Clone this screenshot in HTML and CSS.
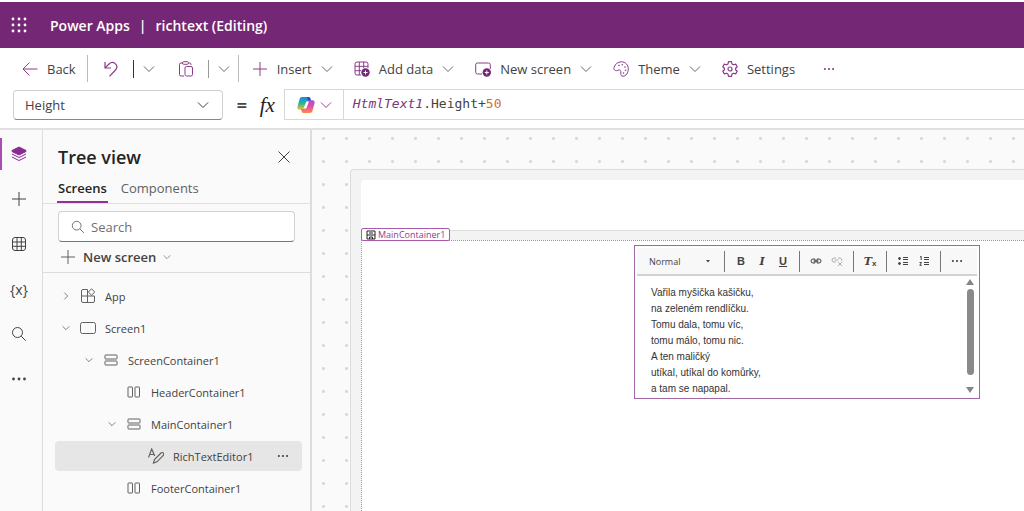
FILE: index.html
```html
<!DOCTYPE html>
<html lang="en">
<head>
    <meta charset="UTF-8">
    <meta name="viewport" content="width=device-width, initial-scale=1.0">
    <title>richtext (Editing) - Power Apps</title>
    <link rel="stylesheet" href="styles.css">
</head>
<body>

    <!-- Shared icons -->
    <svg class="sprite" aria-hidden="true">
        <symbol id="chevron" viewBox="0 0 12 12"><path d="M1 3.5l5 5 5-5"/></symbol>
        <symbol id="plus" viewBox="0 0 16 16"><path d="M8 1v14M1 8h14"/></symbol>
        <symbol id="rows" viewBox="0 0 16 16"><rect x="2" y="3" width="12" height="4" rx=".5"/><rect x="2" y="9" width="12" height="4" rx=".5"/></symbol>
        <symbol id="columns" viewBox="0 0 16 16"><rect x="2" y="3" width="4.500" height="10" rx=".5"/><rect x="9" y="3" width="4.500" height="10" rx=".5"/></symbol>
        <symbol id="search" viewBox="0 0 16 16"><circle cx="6.5" cy="6.5" r="5"/><path d="M10.2 10.2l4.6 4.6"/></symbol>
        <symbol id="grid" viewBox="0 0 16 16"><rect x="1.5" y="1.5" width="13" height="13" rx="2.5"/><path d="M6 1.5v13M10.3 1.5v13M1.5 6h13M1.5 10.3h13"/></symbol>
        <symbol id="dots" viewBox="0 0 16 16"><g fill="currentColor" stroke="none"><circle cx="2.5" cy="8" r="1.4"/><circle cx="8" cy="8" r="1.4"/><circle cx="13.5" cy="8" r="1.4"/></g></symbol>
    </svg>

    <header class="titlebar">
        <button class="waffle" aria-label="App launcher">
            <svg class="icon" viewBox="0 0 16 16"><g fill="#fff" stroke="none"><circle cx="2" cy="2" r="1.4"/><circle cx="8" cy="2" r="1.4"/><circle cx="14" cy="2" r="1.4"/><circle cx="2" cy="8" r="1.4"/><circle cx="8" cy="8" r="1.4"/><circle cx="14" cy="8" r="1.4"/><circle cx="2" cy="14" r="1.4"/><circle cx="8" cy="14" r="1.4"/><circle cx="14" cy="14" r="1.4"/></g></svg>
        </button>
        <span>Power Apps</span>
        <span>|</span>
        <span>richtext (Editing)</span>
    </header>

    <nav class="commands">
        <button class="command"><svg class="icon" viewBox="0 0 16 16"><path d="M15.5 8H1M7.5 1.5L1 8l6.5 6.5"/></svg>Back</button>
        <span class="divider tall"></span>
        <div class="split">
            <button class="command" aria-label="Undo"><svg class="icon" viewBox="0 0 16 16"><path d="M2 1v6h6M2.300 6.700L6 3c2-2 4.600-1.800 6.200-.4 2 1.800 2 4.500.3 6.400L6.500 15.300" stroke-width="1.200"/></svg></button>
            <span class="divider dark"></span>
            <button class="command" aria-label="Undo options"><svg class="chevron"><use href="#chevron"/></svg></button>
        </div>
        <div class="split">
            <button class="command" aria-label="Paste"><svg class="icon" viewBox="0 0 16 16"><path d="M6 15H3A1.500 1.500 0 0 1 1.500 13.500v-10A1.500 1.500 0 0 1 3 2H5M11 2h.5A1.500 1.500 0 0 1 13 3.500V4"/><rect x="4.500" y=".7" width="6" height="2.600" rx="1.200"/><rect x="7" y="5.500" width="7.500" height="9.500" rx="1.500"/></svg></button>
            <span class="divider"></span>
            <button class="command" aria-label="Paste options"><svg class="chevron"><use href="#chevron"/></svg></button>
        </div>
        <span class="divider tall"></span>
        <button class="command insert"><svg class="icon"><use href="#plus"/></svg>Insert<svg class="chevron"><use href="#chevron"/></svg></button>
        <button class="command"><svg class="icon" viewBox="0 0 16 16"><path d="M7 14H3a2 2 0 0 1-2-2V3a2 2 0 0 1 2-2h9a2 2 0 0 1 2 2v4M5.300 1v13M9.700 1v6M1 5.300h13M1 9.700h6"/><circle cx="11.500" cy="11.500" r="4.200" fill="#742774" stroke="none"/><path d="M11.500 9.500v4M9.500 11.500h4" stroke="#fff"/></svg>Add data<svg class="chevron"><use href="#chevron"/></svg></button>
        <button class="command"><svg class="icon" viewBox="0 0 16 16"><path d="M7 13H2.500A1.800 1.800 0 0 1 .7 11.200V3.800A1.800 1.800 0 0 1 2.500 2h11a1.800 1.800 0 0 1 1.800 1.800V8"/><circle cx="11.800" cy="11.500" r="4.200" fill="#742774" stroke="none"/><path d="M11.800 9.500v4M9.800 11.500h4" stroke="#fff"/></svg>New screen<svg class="chevron"><use href="#chevron"/></svg></button>
        <button class="command"><svg class="icon" viewBox="0 0 16 16"><path d="M1 6.500C2 3 5 .8 8.300.8c4 0 7 3 7 7 0 4-2.300 7.400-5.300 7.400-1.800 0-2.400-1.300-2.200-3C8.200 9.700 7 8.300 5 9.200c-2 1-4.600.4-4-2.700z"/><g fill="currentColor" stroke="none"><circle cx="6" cy="4.500" r=".8"/><circle cx="9.300" cy="3.800" r=".8"/><circle cx="12" cy="6" r=".8"/><circle cx="12.500" cy="9.200" r=".8"/><circle cx="10.500" cy="12" r=".8"/></g></svg>Theme<svg class="chevron"><use href="#chevron"/></svg></button>
        <button class="command"><svg class="icon" viewBox="0 0 16 16"><path d="M6.500.7h3l.5 2.200 1.500.9 2.200-.7 1.500 2.600L13.600 7.200v1.600l1.600 1.500-1.500 2.600-2.200-.7-1.500.9-.5 2.200h-3L6 13.100l-1.500-.9-2.200.7-1.500-2.600 1.600-1.500V7.200L.8 5.700l1.500-2.600 2.200.7L6 2.900z" stroke-width="1.200" stroke-linejoin="round"/><circle cx="8" cy="8" r="2" stroke-width="1.200"/></svg>Settings</button>
        <button class="command overflow" aria-label="More commands"><svg class="chevron"><use href="#dots"/></svg></button>
    </nav>

    <div class="formula">
        <div class="property">
            <select aria-label="Property">
                <option>Height</option>
            </select>
            <svg class="chevron"><use href="#chevron"/></svg>
        </div>
        <span class="equals">=</span>
        <span class="fx">fx</span>
        <div class="expression">
            <button class="copilot" aria-label="Copilot">
                <svg viewBox="0 0 18 18">
                    <defs>
                        <linearGradient id="cool" x1="0" y1="0" x2="0" y2="1"><stop offset="0" stop-color="#1a8be8"/><stop offset=".5" stop-color="#28b39a"/><stop offset="1" stop-color="#f2c230"/></linearGradient>
                        <linearGradient id="warm" x1="0" y1="0" x2="0" y2="1"><stop offset="0" stop-color="#9a52e0"/><stop offset=".5" stop-color="#e8509c"/><stop offset="1" stop-color="#ff8a4c"/></linearGradient>
                    </defs>
                    <path d="M5 1h6.500c1 0 1.600.8 1.900 1.800L14 5h-2.500c-1 0-1.500.6-1.800 1.500L8 12c-.4 1.200-1 1.700-2.200 1.700H2.500C.7 13.700 0 12.300.5 10.500L2.600 3C3 1.700 3.700 1 5 1z" fill="url(#cool)"/>
                    <path d="M10 1h1.500c1 0 1.600.8 1.900 1.800L14 5h-3z" fill="#1b4fc4"/>
                    <path d="M13 17H6.500c-1 0-1.600-.8-1.900-1.800L4 13h2.500c1 0 1.500-.6 1.800-1.500L10 6c.4-1.200 1-1.700 2.200-1.700h3.300c1.800 0 2.500 1.400 2 3.200L15.400 15c-.4 1.300-1.100 2-2.400 2z" fill="url(#warm)"/>
                    <path d="M9.300 5.500H12L9.200 12.500H6.500z" fill="#fff"/>
                </svg>
                <svg class="chevron"><use href="#chevron"/></svg>
            </button>
            <div class="code" role="textbox" contenteditable="true" spellcheck="false" aria-label="Formula"><i>HtmlText1</i>.Height+<b>50</b></div>
        </div>
    </div>

    <div class="workspace">
        <nav class="rail">
            <button class="active" aria-label="Tree view"><svg class="icon" viewBox="0 0 16 16"><path d="M8 1l7 3.500v1L8 9 1 5.500v-1z" fill="currentColor"/><path d="M1 8l7 3.500L15 8M1 11l7 3.500 7-3.500"/></svg></button>
            <button aria-label="Insert"><svg class="icon"><use href="#plus"/></svg></button>
            <button aria-label="Data"><svg class="icon"><use href="#grid"/></svg></button>
            <button class="variables" aria-label="Variables">{x}</button>
            <button aria-label="Search"><svg class="icon"><use href="#search"/></svg></button>
            <button aria-label="More"><svg class="icon"><use href="#dots"/></svg></button>
        </nav>

        <aside class="panel">
            <div class="panel-head">
                <h2>Tree view</h2>
                <button aria-label="Close"><svg class="chevron" viewBox="0 0 12 12"><path d="M.5.5l11 11M11.5.5l-11 11"/></svg></button>
            </div>
            <div class="tabs" role="tablist">
                <button class="tab selected" role="tab" aria-selected="true">Screens</button>
                <button class="tab" role="tab" aria-selected="false">Components</button>
            </div>
            <label class="search">
                <svg class="search-icon"><use href="#search"/></svg>
                <input type="text" placeholder="Search" aria-label="Search">
            </label>
            <button class="new-screen"><svg class="icon"><use href="#plus"/></svg>New screen<svg class="small-chevron"><use href="#chevron"/></svg></button>

            <ul class="tree">
                <li class="level-1">
                    <button class="toggle closed" aria-label="Expand"><svg class="small-chevron"><use href="#chevron"/></svg></button>
                    <svg class="icon" viewBox="0 0 16 16"><path d="M7.500 14.500v-13H3A1.500 1.500 0 0 0 1.500 3v10A1.500 1.500 0 0 0 3 14.500h10a1.500 1.500 0 0 0 1.500-1.500V8h-13M11.500.8l3.300 3.200-3.300 3.200L8.300 4z"/></svg>
                    <a href="#app">App</a>
                </li>
                <li class="level-1">
                    <button class="toggle" aria-label="Collapse"><svg class="small-chevron"><use href="#chevron"/></svg></button>
                    <svg class="icon" viewBox="0 0 16 16"><rect x=".5" y="2.500" width="15" height="11" rx="2"/></svg>
                    <a href="#screen">Screen1</a>
                </li>
                <li class="level-2">
                    <button class="toggle" aria-label="Collapse"><svg class="small-chevron"><use href="#chevron"/></svg></button>
                    <svg class="icon"><use href="#rows"/></svg>
                    <a href="#screen-container">ScreenContainer1</a>
                </li>
                <li class="level-3">
                    <span class="toggle"></span>
                    <svg class="icon"><use href="#columns"/></svg>
                    <a href="#header-container">HeaderContainer1</a>
                </li>
                <li class="level-3">
                    <button class="toggle" aria-label="Collapse"><svg class="small-chevron"><use href="#chevron"/></svg></button>
                    <svg class="icon"><use href="#rows"/></svg>
                    <a href="#main-container">MainContainer1</a>
                </li>
                <li class="level-4 current">
                    <span class="toggle"></span>
                    <svg class="icon" viewBox="0 0 16 16"><path d="M.5 9.500L3.700 1l3 7M1.700 6.500h4M5.500 15l1-3.500 6.500-6.500a1.600 1.600 0 0 1 2.300 2.300L9 13.800z" stroke-width="1.200"/></svg>
                    <a href="#rich-text-editor">RichTextEditor1</a>
                    <button class="more" aria-label="More actions"><svg class="chevron"><use href="#dots"/></svg></button>
                </li>
                <li class="level-3">
                    <span class="toggle"></span>
                    <svg class="icon"><use href="#columns"/></svg>
                    <a href="#footer-container">FooterContainer1</a>
                </li>
            </ul>
        </aside>

        <main class="canvas">
            <div class="screen">
                <div class="header-container"></div>
                <div class="main-container">
                    <span class="tag"><svg viewBox="0 0 10 10"><path d="M1 1h8v8H1zM1 5h8M3 3h4M3.500 9V7h3v2" fill="none" stroke="#222"/></svg>MainContainer1</span>
                    <div class="editor">
                        <div class="editor-tools" role="toolbar">
                            <div class="style-pick">
                                <select aria-label="Style">
                                    <option>Normal</option>
                                </select>
                                <svg viewBox="0 0 6 6"><path d="M1 2h4L3 4.500z"/></svg>
                            </div>
                            <div class="tool-group">
                                <button aria-label="Bold"><b>B</b></button>
                                <button class="serif" aria-label="Italic"><i>I</i></button>
                                <button aria-label="Underline"><u>U</u></button>
                            </div>
                            <div class="tool-group">
                                <button aria-label="Link"><svg viewBox="0 0 12 12"><path d="M5 4H3a2 2 0 0 0 0 4h2M7 4h2a2 2 0 0 1 0 4H7M3.500 6h5M5 4v4M7 4v4"/></svg></button>
                                <button aria-label="Unlink" disabled><svg viewBox="0 0 12 12"><path d="M5 3H3a2 2 0 0 0 0 4h2M7 3h2a2 2 0 0 1 1.500 3M3.500 5h4M7 7l4 4M11 7l-4 4"/></svg></button>
                            </div>
                            <div class="tool-group">
                                <button class="serif clear" aria-label="Remove format"><i>T</i><sub>x</sub></button>
                            </div>
                            <div class="tool-group">
                                <button aria-label="Bulleted list"><svg viewBox="0 0 12 12"><path d="M6 2.500h5M6 4.500h5M6 7.500h5M6 9.500h5"/><circle cx="2.500" cy="3.500" r="1"/><circle cx="2.500" cy="8.500" r="1"/></svg></button>
                                <button aria-label="Numbered list"><svg viewBox="0 0 12 12"><path d="M6 2.500h5M6 4.500h5M6 7.500h5M6 9.500h5M2 2l1.200-.7V5M1.500 7.500h2L1.800 10.300h2"/></svg></button>
                            </div>
                            <div class="tool-group">
                                <button aria-label="More tools"><svg viewBox="0 0 16 16"><use href="#dots"/></svg></button>
                            </div>
                        </div>
                        <div class="editor-body">
                            <div class="editor-text" role="textbox" aria-multiline="true" aria-label="Rich text" contenteditable="true" spellcheck="false" lang="cs">
                                Vařila myšička kašičku,<br>
                                na zeleném rendlíčku.<br>
                                Tomu dala, tomu víc,<br>
                                tomu málo, tomu nic.<br>
                                A ten maličký<br>
                                utíkal, utíkal do komůrky,<br>
                                a tam se napapal.
                            </div>
                            <div class="scrollbar">
                                <svg viewBox="0 0 8 6"><path d="M4 0l4 6H0z"/></svg>
                                <span class="thumb"></span>
                                <svg viewBox="0 0 8 6"><path d="M0 0h8L4 6z"/></svg>
                            </div>
                        </div>
                    </div>
                </div>
            </div>
        </main>
    </div>

</body>
</html>
```
FILE: styles.css
```css
* {
    box-sizing: border-box;
}
body {
    display: flex;
    flex-direction: column;
    height: 100vh;
    margin: 0;
    overflow: hidden;
    font-family: "Open Sans", "Noto Sans", sans-serif;
    font-size: 13px;
    color: #424242;
    background: #fff;
}
button {
    display: flex;
    align-items: center;
    padding: 0;
    border: none;
    background: none;
    font: inherit;
    color: inherit;
    cursor: pointer;
}
svg {
    flex: none;
    fill: none;
    stroke: currentColor;
}
.sprite {
    display: none;
}
.icon {
    width: 16px;
    height: 16px;
}
.chevron {
    width: 12px;
    height: 12px;
}
.small-chevron {
    width: 8px;
    height: 8px;
}

/* Title bar */
.titlebar {
    display: flex;
    flex: none;
    align-items: center;
    gap: 9px;
    height: 48px;
    padding: 0 11px;
    border-top: 2px solid #fff;
    background: #742774;
    color: #fff;
    font-size: 14px;
    font-weight: 600;
}
.waffle {
    margin-right: 14px;
}

/* Command bar */
.commands {
    display: flex;
    flex: none;
    align-items: center;
    height: 41px;
    padding-left: 22px;
}
.command {
    gap: 9px;
    margin-right: 21px;
    white-space: nowrap;
}
.command .icon,
.overflow {
    color: #8a3c8a;
}
.command .chevron {
    color: #666;
}
.overflow .chevron {
    color: inherit;
}
.command:first-child {
    margin-right: 11px;
}
.overflow {
    margin-left: 7px;
}
.insert {
    margin-left: 13px;
}
.divider {
    width: 1px;
    height: 18px;
    background: #999;
}
.divider.tall {
    height: 27px;
    background: #bbb;
}
.divider.dark {
    background: #333;
}
.split {
    display: flex;
    align-items: center;
    margin-left: 15px;
}
.split .command {
    margin-right: 14px;
}
.split .divider {
    margin-right: 9px;
}
.split .command:last-child {
    margin-right: 8px;
}

/* Formula bar */
.formula {
    display: flex;
    flex: none;
    align-items: center;
    height: 39px;
    padding: 0 0 8px 13px;
}
.property {
    display: flex;
    align-items: center;
    width: 210px;
    height: 30px;
    padding: 0 13px 0 11px;
    border: 1px solid #d1d1d1;
    border-bottom-color: #888;
    border-radius: 4px;
}
select {
    flex: 1;
    min-width: 0;
    padding: 0;
    border: none;
    background: none;
    font: inherit;
    color: inherit;
    appearance: none;
}
.equals {
    margin: 0 12px 0 13px;
    font-family: "DejaVu Sans", sans-serif;
    font-size: 14px;
    font-weight: bold;
    color: #444;
}
.fx {
    width: 24px;
    font-family: "Liberation Serif", serif;
    font-size: 21px;
    font-style: italic;
    line-height: 30px;
    color: #222;
}
.expression {
    display: flex;
    flex: 1;
    height: 31px;
    border: 1px solid #d8d8d8;
    border-right: none;
}
.copilot {
    gap: 5px;
    width: 59px;
    padding-left: 12px;
    border-right: 1px solid #d8d8d8;
}
.copilot svg:first-child {
    width: 18px;
    height: 18px;
    stroke: none;
}
.copilot .chevron {
    color: #a040a0;
}
.code {
    flex: 1;
    padding-left: 9px;
    font-family: "DejaVu Sans Mono", monospace;
    font-size: 13px;
    line-height: 27px;
}
.code i {
    color: #7d377d;
}
.code b {
    font-weight: normal;
    color: #d0712a;
}

/* Workspace */
.workspace {
    display: flex;
    flex: 1;
    min-height: 0;
    border-top: 2px solid #e1e1e1;
    background: #fafafa;
}
.rail {
    display: flex;
    flex: none;
    flex-direction: column;
    gap: 13px;
    width: 42px;
    padding-top: 8px;
}
.rail button {
    justify-content: center;
    height: 32px;
    padding-right: 6px;
    border-left: 2px solid transparent;
}
.rail .active {
    border-left-color: #a94bb0;
    color: #8a2b91;
}
.rail .variables {
    font-size: 14px;
}
.panel {
    flex: none;
    width: 270px;
    border-left: 1px solid #ddd;
    border-right: 2px solid #ddd;
}
.panel-head {
    display: flex;
    align-items: center;
    justify-content: space-between;
    height: 46px;
    padding: 8px 20px 0 15px;
}
h2 {
    margin: 0;
    font-size: 18px;
    font-weight: 600;
    color: #242424;
}
.tabs {
    display: flex;
    gap: 12px;
    height: 28px;
    padding-left: 14px;
    border-bottom: 1px solid #e0e0e0;
}
.tab {
    height: 27px;
    padding: 0 1px 2px;
    border-bottom: 2px solid transparent;
    color: #616161;
}
.tab.selected {
    border-color: #92319a;
    font-weight: 600;
    color: #242424;
}
.search {
    display: flex;
    align-items: center;
    gap: 6px;
    height: 31px;
    margin: 7px 15px 0;
    padding-left: 12px;
    border: 1px solid #d1d1d1;
    border-bottom-color: #777;
    border-radius: 4px;
    background: #fff;
    color: #616161;
}
.search-icon {
    width: 14px;
    height: 14px;
}
.search input {
    flex: 1;
    min-width: 0;
    padding: 0;
    border: none;
    outline: none;
    background: none;
    font: inherit;
}
.search input::placeholder {
    color: #707070;
}
.new-screen {
    gap: 7px;
    width: 100%;
    height: 31px;
    padding-left: 17px;
    border-bottom: 1px solid #ddd;
    font-weight: 600;
}
.new-screen svg {
    color: #616161;
}
.tree {
    display: flex;
    flex-direction: column;
    gap: 2px;
    margin: 0;
    padding: 8px 8px 0 12px;
    list-style: none;
    font-size: 11px;
}
.tree li {
    display: flex;
    align-items: center;
    height: 30px;
    padding-right: 13px;
    border-radius: 4px;
}
.tree a {
    margin-left: 9px;
    color: inherit;
    text-decoration: none;
}
.tree .icon {
    color: #616161;
}
.tree .level-1 {
    padding-left: 7px;
}
.tree .level-2 {
    padding-left: 30px;
}
.tree .level-3 {
    padding-left: 53px;
}
.tree .level-4 {
    padding-left: 75px;
}
.tree .current {
    background: #e6e6e6;
}
.toggle {
    width: 18px;
}
.closed svg {
    transform: rotate(-90deg);
}
.more {
    margin-left: auto;
}

/* Canvas */
.canvas {
    flex: 1;
    min-width: 0;
    padding: 39px 0 0 38px;
    background-image: radial-gradient(circle, #d8d8d8 1px, transparent 2px);
    background-position: 0 -3px;
    background-size: 23px 23px;
}
.screen {
    display: flex;
    flex-direction: column;
    height: 100%;
    padding: 10px 0 0 10px;
    border: 1px solid #dcdcdc;
    border-width: 1px 0 0 1px;
    border-radius: 4px 0 0;
    background: #f3f3f3;
}
.header-container {
    height: 51px;
    margin-bottom: 9px;
    border-bottom: 1px solid #ddd;
    border-radius: 4px 0 0;
    background: #fff;
}
.main-container {
    position: relative;
    flex: 1;
    padding: 4px 0 0 272px;
    border: 1px dotted #b880bb;
    border-width: 1px 0 0 1px;
    background: #fff;
}
.tag {
    position: absolute;
    top: -13px;
    left: -1px;
    display: flex;
    align-items: center;
    gap: 2px;
    height: 13px;
    padding: 0 4px;
    border: 1px solid #a85aac;
    border-radius: 2px;
    background: #fff;
    font-size: 9px;
    color: #8a3c8a;
}
.tag svg {
    width: 10px;
    height: 10px;
}

/* Rich text editor */
.editor {
    width: 346px;
    height: 154px;
    padding: 2px;
    border: 1px solid #a266a5;
    background: #fff;
    font-family: "Liberation Sans", Arial, sans-serif;
}
.editor-tools {
    display: flex;
    align-items: center;
    height: 28px;
    border-bottom: 2px solid #d2d2d2;
    background: #f8f8f8;
    font-size: 11px;
}
.style-pick {
    display: flex;
    align-items: center;
    width: 87px;
    padding: 0 13px 0 12px;
    font-family: "Open Sans", sans-serif;
    font-size: 9px;
}
.style-pick svg {
    width: 6px;
    height: 6px;
    fill: #444;
    stroke: none;
}
.tool-group {
    display: flex;
    align-items: center;
    gap: 9px;
    height: 21px;
    padding: 0 10px;
    border-left: 1px solid #777;
}
.tool-group button {
    justify-content: center;
    width: 12px;
    font-weight: bold;
}
.tool-group button:disabled {
    opacity: .4;
}
.tool-group svg {
    width: 12px;
    height: 12px;
}
.tool-group circle {
    fill: currentColor;
}
.serif {
    font-family: "DejaVu Serif", serif;
}
.clear sub {
    align-self: flex-end;
    font-family: "Liberation Sans", sans-serif;
    font-size: 8px;
    line-height: 8px;
}
.editor-body {
    display: flex;
    height: 120px;
}
.editor-text {
    flex: 1;
    padding: 9px 0 0 14px;
    outline: none;
    font-size: 10px;
    line-height: 16px;
    color: #333;
}
.scrollbar {
    display: flex;
    flex-direction: column;
    align-items: center;
    gap: 4px;
    width: 14px;
    padding: 3px 0;
}
.scrollbar svg {
    width: 8px;
    height: 6px;
    fill: #858585;
    stroke: none;
}
.thumb {
    flex: 1;
    width: 7px;
    margin-bottom: 8px;
    border-radius: 4px;
    background: #8a8a8a;
}
```
